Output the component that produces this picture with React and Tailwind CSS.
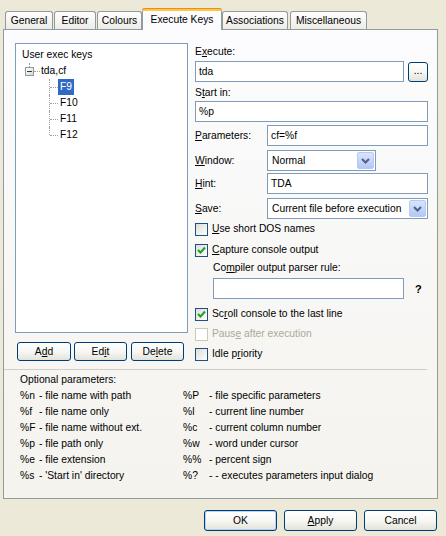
import React from "react";

const U = ({ children }) => <span className="underline underline-offset-[1px]">{children}</span>;

const XpButton = ({ className = "", children }) => (
  <button
    type="button"
    className={`flex items-center justify-center rounded-[3px] border border-[#003C74] bg-gradient-to-b from-white via-[#F7F7F4] to-[#E3E2DA] text-black ${className}`}
  >
    {children}
  </button>
);

const Tab = ({ label, className = "" }) => (
  <div
    className={`flex h-[18px] items-center justify-center rounded-t-[3px] border border-b-0 border-[#919B9C] bg-gradient-to-b from-white to-[#ECEBE6] ${className}`}
  >
    {label}
  </div>
);

const Chevron = () => (
  <svg width="9" height="6" viewBox="0 0 9 6">
    <path d="M1 1 L4.5 4.5 L8 1" fill="none" stroke="#4D6185" strokeWidth="2" />
  </svg>
);

const Select = ({ value, className = "" }) => (
  <div className={`flex h-[21px] items-center border border-[#7F9DB9] bg-white ${className}`}>
    <span className="pl-[4px]">{value}</span>
    <div className="ml-auto mr-[1px] flex h-[17px] w-[17px] items-center justify-center rounded-[2px] border border-[#B6C9F5] bg-gradient-to-b from-[#D9E4FD] to-[#B4C8F6]">
      <Chevron />
    </div>
  </div>
);

const Input = ({ value = "", className = "" }) => (
  <div className={`flex h-[21px] items-center border border-[#7F9DB9] bg-white pl-[3px] ${className}`}>
    {value}
  </div>
);

const Check = ({ checked, disabled, children }) => (
  <div className="flex h-[20px] items-center">
    <div
      className={`flex h-[13px] w-[13px] items-center justify-center border ${
        disabled
          ? "border-[#CAC8BB] bg-white"
          : "border-[#1C5180] bg-gradient-to-br from-[#DCDCD7] to-white"
      }`}
    >
      {checked && (
        <svg width="9" height="9" viewBox="0 0 9 9">
          <path d="M1 4 L3.5 6.5 L8 1.5" fill="none" stroke="#21A121" strokeWidth="2" />
        </svg>
      )}
    </div>
    <span className={`ml-[4px] ${disabled ? "text-[#ACA899]" : ""}`}>{children}</span>
  </div>
);

const params = [
  ["%n", "- file name with path", "%P", "- file specific parameters"],
  ["%f", "- file name only", "%l", "- current line number"],
  ["%F", "- file name without ext.", "%c", "- current column number"],
  ["%p", "- file path only", "%w", "- word under cursor"],
  ["%e", "- file extension", "%%", "- percent sign"],
  ["%s", "- 'Start in' directory", "%?", "- - executes parameters input dialog"],
];

const children = ["F9", "F10", "F11", "F12"];

export default function App() {
  return (
    <div className="h-[536px] w-[446px] overflow-hidden bg-[#ECE9D8] font-['Liberation_Sans',Arial,sans-serif] text-[10.3px] leading-[14px] text-black">
      {/* tabs */}
      <div className="flex h-[29px] items-end pl-[5px] pt-[7px]">
        <Tab label="General" className="w-[48px]" />
        <Tab label="Editor" className="ml-[1px] w-[42px]" />
        <Tab label="Colours" className="ml-[1px] w-[45px]" />
        <div className="relative z-10 -mb-px flex h-[22px] w-[80px] flex-col rounded-t-[3px] border-x border-[#919B9C] bg-[#FCFCFE]">
          <div className="-mx-px h-[3px] rounded-t-[3px] border-t border-[#E68B2C] bg-[#FFC83C]" />
          <div className="flex flex-1 items-center justify-center pb-[2px]">Execute Keys</div>
        </div>
        <Tab label="Associations" className="w-[66px]" />
        <Tab label="Miscellaneous" className="ml-[2px] w-[77px]" />
      </div>

      {/* panel */}
      <div className="ml-[3px] h-[470px] w-[435px] border border-[#919B9C] bg-gradient-to-b from-[#FCFCFE] to-[#F4F3EE]">
        <div className="flex pl-[11px] pt-[13px]">
          {/* left column */}
          <div className="w-[173px]">
            <div className="h-[290px] border border-[#7F9DB9] bg-white pt-[3px]">
              <div className="flex h-[16px] items-center pl-[6px]">User exec keys</div>
              <div className="flex h-[16px] items-center">
                <div className="relative ml-[9px] flex h-[9px] w-[9px] items-center justify-center border border-[#919B9C] bg-gradient-to-br from-white to-[#D8D8CC]">
                  <span className="absolute -top-[5px] left-[3px] h-[4px] border-l border-dotted border-[#A0A0A0]" />
                  <span className="h-px w-[5px] bg-[#1F3A6E]" />
                </div>
                <span className="h-0 w-[6px] border-t border-dotted border-[#A0A0A0]" />
                <span className="ml-[1px]">tda,cf</span>
              </div>
              {children.map((c, i) => (
                <div key={c} className="flex h-[16px] items-center">
                  <span className="w-[33px]" />
                  <span
                    className={`w-0 self-start border-l border-dotted border-[#A0A0A0] ${
                      i === children.length - 1 ? "h-[8px]" : "h-[16px]"
                    }`}
                  />
                  <span className="h-0 w-[8px] border-t border-dotted border-[#A0A0A0]" />
                  <span
                    className={`h-[16px] px-[2px] leading-[16px] ${
                      i === 0 ? "bg-[#316AC5] text-white" : ""
                    }`}
                  >
                    {c}
                  </span>
                </div>
              ))}
            </div>
            <div className="mt-[9px] flex">
              <XpButton className="ml-[2px] h-[19px] w-[54px]">
                <span>
                  A<U>d</U>d
                </span>
              </XpButton>
              <XpButton className="ml-[3px] h-[19px] w-[53px]">
                <span>
                  Ed<U>i</U>t
                </span>
              </XpButton>
              <XpButton className="ml-[4px] h-[19px] w-[53px]">
                <span>
                  De<U>l</U>ete
                </span>
              </XpButton>
            </div>
          </div>

          {/* right column */}
          <div className="ml-[7px] w-[233px]">
            <div className="mt-[2px] h-[14px]">
              E<U>x</U>ecute:
            </div>
            <div className="mt-[2px] flex">
              <Input value="tda" className="w-[209px]" />
              <XpButton className="ml-[4px] mt-[1px] h-[20px] w-[20px] pb-[3px]">...</XpButton>
            </div>
            <div className="mt-[4px] h-[14px]">
              S<U>t</U>art in:
            </div>
            <Input value="%p" className="mt-[1px] w-[233px]" />
            <div className="mt-[3px] flex items-center">
              <span className="w-[72px]">
                <U>P</U>arameters:
              </span>
              <Input value="cf=%f" className="w-[161px]" />
            </div>
            <div className="mt-[4px] flex items-center">
              <span className="w-[72px]">
                <U>W</U>indow:
              </span>
              <Select value="Normal" className="w-[109px]" />
            </div>
            <div className="mt-[2px] flex items-center">
              <span className="w-[72px]">
                <U>H</U>int:
              </span>
              <Input value="TDA" className="w-[161px]" />
            </div>
            <div className="mt-[4px] flex items-center">
              <span className="w-[72px]">
                <U>S</U>ave:
              </span>
              <Select value="Current file before execution" className="w-[161px]" />
            </div>
            <Check>
              <U>U</U>se short DOS names
            </Check>
            <div className="mt-[1px]">
              <Check checked>
                <U>C</U>apture console output
              </Check>
            </div>
            <div className="ml-[18px] mt-[1px] h-[14px]">
              Co<U>m</U>piler output parser rule:
            </div>
            <div className="mt-[3px] flex items-center">
              <Input className="ml-[18px] w-[191px]" />
              <span className="ml-[11px] text-[11px] font-bold">?</span>
            </div>
            <div className="mt-[5px]">
              <Check checked>
                Sc<U>r</U>oll console to the last line
              </Check>
            </div>
            <Check disabled>
              Paus<U>e</U> after execution
            </Check>
            <Check>
              Idle p<U>r</U>iority
            </Check>
          </div>
        </div>

        <div className="mt-[5px] w-[423px] border-t border-[#D0CFC4]" />

        <div className="mt-[2px] pl-[16px] leading-[16px]">
          <div>Optional parameters:</div>
          {params.map(([a, b, c, d]) => (
            <div key={a} className="flex">
              <div className="flex w-[163px]">
                <span className="w-[19px]">{a}</span>
                <span>{b}</span>
              </div>
              <div className="flex">
                <span className="w-[26px]">{c}</span>
                <span>{d}</span>
              </div>
            </div>
          ))}
        </div>
      </div>

      {/* dialog buttons */}
      <div className="mt-[11px] flex gap-[7px] pl-[204px]">
        <XpButton className="h-[21px] w-[73px] shadow-[inset_0_0_0_1px_#B8D2F6]">OK</XpButton>
        <XpButton className="h-[21px] w-[73px]">
          <span>
            <U>A</U>pply
          </span>
        </XpButton>
        <XpButton className="h-[21px] w-[73px]">Cancel</XpButton>
      </div>
    </div>
  );
}
